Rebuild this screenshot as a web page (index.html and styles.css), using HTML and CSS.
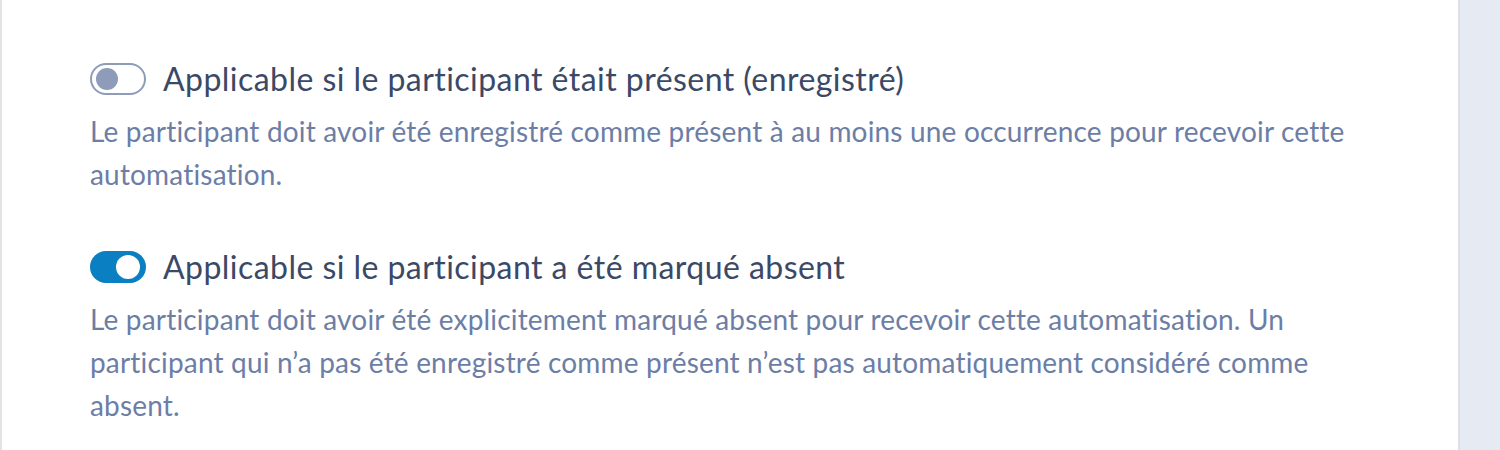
FILE: index.html
```html
<!DOCTYPE html>
<html lang="fr">
<head>
    <meta charset="UTF-8">
    <title>Conditions d'envoi</title>
    <link rel="stylesheet" href="styles.css">
</head>
<body>
    <div class="panel">
        <div class="option">
            <label class="option-head">
                <span class="switch"><span class="knob"></span></span>
                <span class="option-title">Applicable si le participant était présent (enregistré)</span>
            </label>
            <p class="option-desc">Le participant doit avoir été enregistré comme présent à au moins une occurrence pour recevoir cette automatisation.</p>
        </div>
        <div class="option">
            <label class="option-head">
                <span class="switch on"><span class="knob"></span></span>
                <span class="option-title">Applicable si le participant a été marqué absent</span>
            </label>
            <p class="option-desc">Le participant doit avoir été explicitement marqué absent pour recevoir cette automatisation. Un participant qui n’a pas été enregistré comme présent n’est pas automatiquement considéré comme absent.</p>
        </div>
    </div>
    <div class="sidebar"></div>
</body>
</html>
```

FILE: styles.css
```css
* {
    box-sizing: border-box;
}
body {
    margin: 0;
    display: flex;
    height: 450px;
    font-family: 'Lato', 'Open Sans', sans-serif;
    background-color: #ffffff;
    overflow: hidden;
}
.panel {
    flex: 1;
    padding: 63px 88px 0;
    background-color: #ffffff;
    border-left: 2px solid #e3e3e3;
    border-right: 2px solid #dcdfe7;
}
.sidebar {
    width: 40px;
    background-color: #e6eaf3;
}
.option {
    margin-bottom: 55px;
}
.option-head {
    display: flex;
    align-items: center;
    gap: 17px;
    cursor: pointer;
}
.switch {
    display: flex;
    align-items: center;
    width: 56px;
    height: 32px;
    padding: 0 4px;
    border: 2px solid #8e9bb9;
    border-radius: 16px;
    background-color: #ffffff;
    flex-shrink: 0;
}
.knob {
    width: 22px;
    height: 22px;
    border-radius: 50%;
    background-color: #8e9bb9;
}
.switch.on {
    justify-content: flex-end;
    border-color: #0a7fc2;
    background-color: #0a7fc2;
}
.switch.on .knob {
    width: 24px;
    height: 24px;
    background-color: #ffffff;
}
.option-title {
    font-size: 32px;
    line-height: 32px;
    letter-spacing: 0.45px;
    color: #3b4966;
}
.option-desc {
    margin: 15px 0 0;
    font-size: 28px;
    line-height: 43px;
    letter-spacing: 0.18px;
    color: #6c7ea6;
}
```
